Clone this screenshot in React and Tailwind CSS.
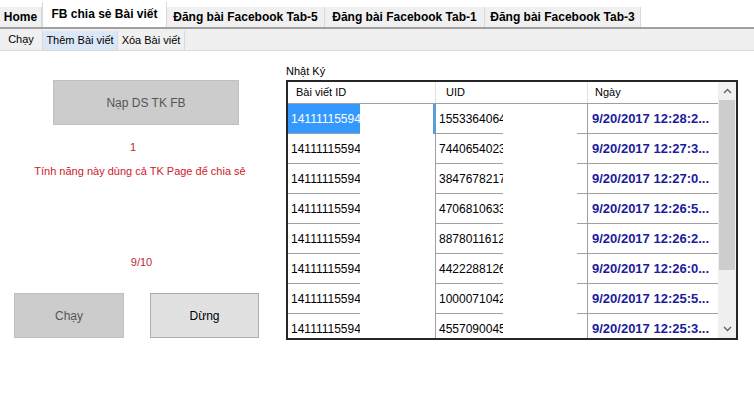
import React from "react";

const rows = [
  { id: "141111155944", uid: "1553364064", date: "9/20/2017 12:28:2...", sel: true },
  { id: "141111155944", uid: "7440654023", date: "9/20/2017 12:27:3..." },
  { id: "141111155944", uid: "3847678217", date: "9/20/2017 12:27:0..." },
  { id: "141111155944", uid: "4706810633", date: "9/20/2017 12:26:5..." },
  { id: "141111155944", uid: "8878011612", date: "9/20/2017 12:26:2..." },
  { id: "141111155944", uid: "4422288126", date: "9/20/2017 12:26:0..." },
  { id: "141111155944", uid: "1000071042", date: "9/20/2017 12:25:5..." },
  { id: "141111155944", uid: "4557090045", date: "9/20/2017 12:25:3..." },
];

function Chevron({ up }) {
  return (
    <svg width="9" height="6" viewBox="0 0 9 6">
      <polyline
        points={up ? "1,5 4.5,1.5 8,5" : "1,1 4.5,4.5 8,1"}
        fill="none"
        stroke="#606060"
        strokeWidth="1.3"
      />
    </svg>
  );
}

export default function App() {
  return (
    <div className="w-[754px] h-[404px] bg-white text-black overflow-hidden font-['Liberation_Sans',Arial,sans-serif]">
      {/* main tabs */}
      <div className="h-[29px] flex items-end border-b-2 border-[#a0a0a0] text-[12px] font-bold">
        <div className="w-[42px] h-[20px] flex items-center justify-center bg-[#f0f0f0] border-r border-[#d9d9d9]">Home</div>
        <div className="w-[125px] h-[25px] flex items-start pt-[3px] justify-center bg-white border-x border-[#d9d9d9]">FB chia sẻ Bài viết</div>
        <div className="w-[158px] h-[20px] flex items-center justify-center bg-[#f0f0f0] border-r border-[#d9d9d9]">Đăng bài Facebook Tab-5</div>
        <div className="w-[160px] h-[20px] flex items-center justify-center bg-[#f0f0f0] border-r border-[#d9d9d9]">Đăng bài Facebook Tab-1</div>
        <div className="w-[156px] h-[20px] flex items-center justify-center bg-[#f0f0f0] border-r border-[#d9d9d9]">Đăng bài Facebook Tab-3</div>
      </div>

      {/* sub tabs */}
      <div className="h-[22px] flex items-end bg-[#f0f0f0] border-b border-[#d9d9d9] text-[11px]">
        <div className="w-[42px] h-[21px] flex items-start pt-[2px] justify-center">Chạy</div>
        <div className="w-[76px] h-[19px] flex items-center justify-center bg-[#dbe7f6] border-x border-[#d9d9d9]">Thêm Bài viết</div>
        <div className="w-[67px] h-[19px] flex items-center justify-center border-r border-[#d9d9d9]">Xóa Bài viết</div>
      </div>

      <div className="flex">
        {/* left panel */}
        <div className="w-[286px] flex flex-col text-[11px] leading-[14px]">
          <div className="ml-[53px] mt-[29px] w-[186px] h-[45px] flex items-center justify-center bg-[#cccccc] border border-[#bfbfbf] text-[#555555] text-[12px]">
            Nạp DS TK FB
          </div>
          <div className="mt-[15px] w-[266px] text-center text-[#c0282d]">1</div>
          <div className="mt-[10px] w-[280px] text-center text-[#d0202a]">Tính năng này dùng cả TK Page để chia sẻ</div>
          <div className="mt-[77px] w-[283px] text-center text-[#c0282d]">9/10</div>
          <div className="mt-[24px] ml-[14px] flex gap-[26px] text-[12px]">
            <div className="w-[110px] h-[45px] flex items-center justify-center bg-[#cccccc] border border-[#bfbfbf] text-[#555555]">Chạy</div>
            <div className="w-[109px] h-[45px] flex items-center justify-center bg-[#e1e1e1] border border-[#adadad]">Dừng</div>
          </div>
        </div>

        {/* right panel */}
        <div className="flex flex-col text-[11px]">
          <div className="mt-[12px] h-[17px] leading-[17px]">Nhật Ký</div>
          <div className="w-[452px] h-[260px] border-2 border-[#262626] flex overflow-hidden">
            <div className="w-[430px] flex flex-col">
              <div className="h-[22px] flex shrink-0 border-b border-[#a0a0a0]">
                <div className="w-[147px] pl-[8px] flex items-center">Bài viết ID</div>
                <div className="w-[152px] pl-[10px] flex items-center border-l border-[#e0e0e0]">UID</div>
                <div className="w-[131px] pl-[7px] flex items-center border-l border-[#e0e0e0]">Ngày</div>
              </div>
              {rows.map((r, i) => (
                <div key={i} className="h-[30px] shrink-0 flex text-[12px]">
                  <div className={`w-[72px] pl-[3px] flex items-center overflow-hidden whitespace-nowrap border-b border-[#a0a0a0] ${r.sel ? "bg-[#3399ff] text-white" : ""}`}>
                    {r.id}
                  </div>
                  <div className="w-[73px]" />
                  <div className={`w-[3px] ${r.sel ? "bg-[#5b9ee0]" : "border-r border-[#a0a0a0]"}`} />
                  <div className="w-[67px] pl-[3px] flex items-center overflow-hidden whitespace-nowrap border-b border-[#a0a0a0]">
                    {r.uid}
                  </div>
                  <div className="w-[74px]" />
                  <div className="w-[10px] border-b border-[#a0a0a0]" />
                  <div className="w-[131px] pl-[4px] flex items-center whitespace-nowrap border-l border-b border-[#a0a0a0] font-bold text-[13px] text-[#1b1b9e]">
                    {r.date}
                  </div>
                </div>
              ))}
            </div>
            <div className="w-[18px] bg-[#f0f0f0] flex flex-col">
              <div className="h-[18px] flex items-center justify-center"><Chevron up /></div>
              <div className="h-[170px] mx-[1px] bg-[#cdcdcd]" />
              <div className="flex-1" />
              <div className="h-[18px] flex items-center justify-center"><Chevron /></div>
            </div>
          </div>
        </div>
      </div>
    </div>
  );
}
